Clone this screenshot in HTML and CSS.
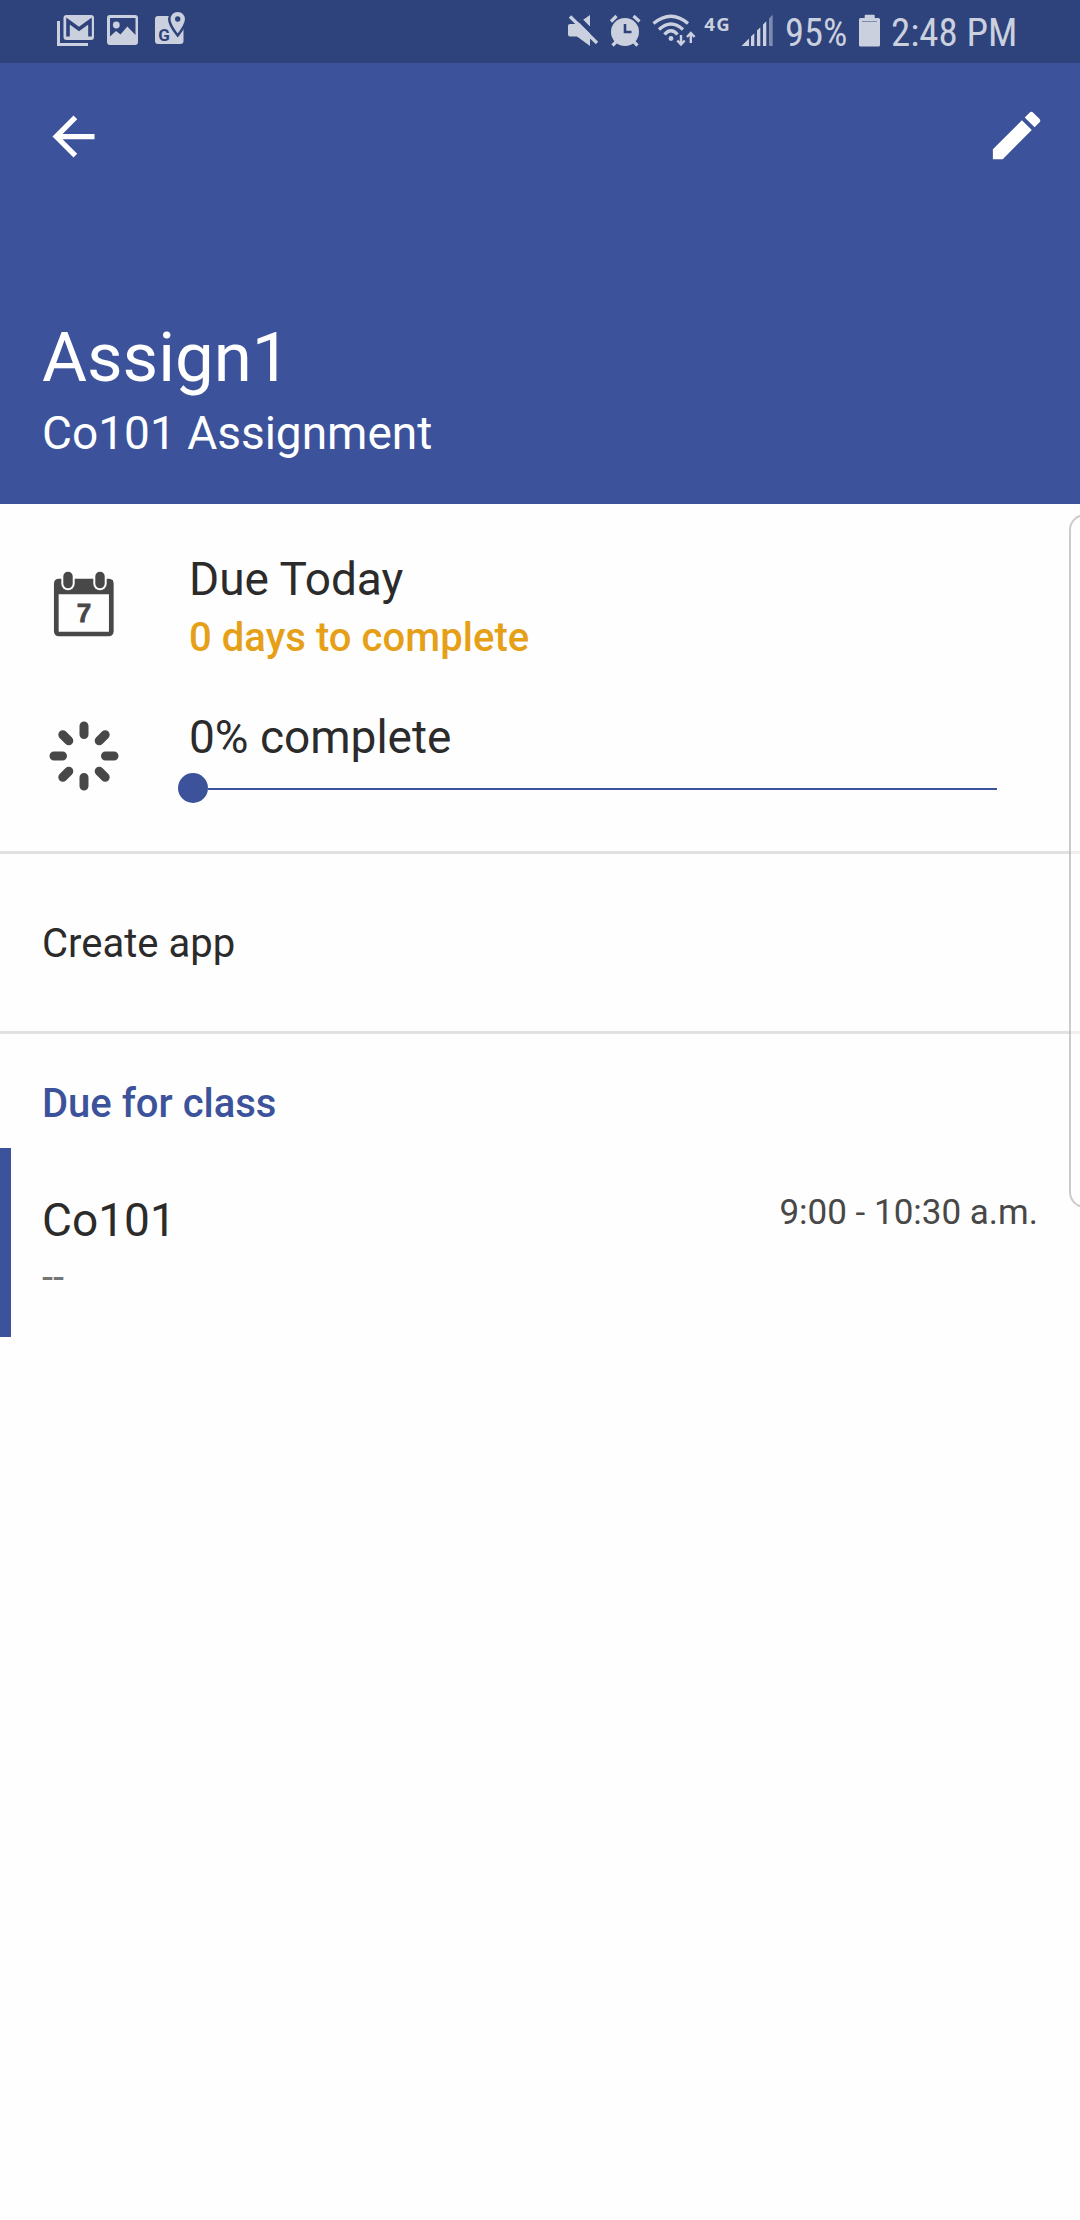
FILE: index.html
```
<!DOCTYPE html>
<html lang="en">
<head>
<meta charset="utf-8">
<title>Assign1</title>
<link rel="stylesheet" href="styles.css">
</head>
<body>
<div class="status">
  <div class="status-group">
    <svg width="50" height="63" viewBox="50 0 50 63"><path class="line" d="M58.500 21V44.500H88" stroke-width="3"/><rect class="fill" x="63.500" y="15" width="30.500" height="25" rx="3"/><path class="cut" d="M68 36.500V21L79 29L90 21V36.500" stroke-width="3.600"/></svg>
    <svg width="46" height="63" viewBox="100 0 46 63"><rect class="fill" x="107" y="15" width="31" height="30" rx="3"/><path class="dark" d="M110 18H135.500V35L127.300 26.500L120.500 34.500L116 31L110 36.500Z"/><circle class="fill" cx="116.300" cy="25" r="3.400"/></svg>
    <svg width="50" height="63" viewBox="146 0 50 63"><rect class="fill" x="155" y="16" width="28.500" height="28" rx="3"/><path class="fill edge" d="M177.700 12c-4.100 0-7.200 3.200-7.200 7.100 0 5.400 7.200 14.400 7.200 14.400s7.200-9 7.200-14.400c0-3.900-3.100-7.100-7.200-7.100z"/><path class="fill" d="M177.700 12c-4.100 0-7.200 3.200-7.200 7.100 0 5.400 7.200 14.400 7.200 14.400s7.200-9 7.200-14.400c0-3.900-3.100-7.100-7.200-7.100z"/><circle class="dark" cx="177.700" cy="19" r="2.700"/><text class="g" x="158.300" y="40.800">G</text></svg>
  </div>
  <div class="status-group">
    <svg width="44" height="63" viewBox="560 0 44 63"><path class="fill" d="M570 24H577L590 15V46L577 36.500H570Q568 36.500 568 34.500V26Q568 24 570 24Z"/><path class="cut" d="M572.500 12.500L600 40" stroke-width="5"/><path class="line" d="M570 16.500L597 43" stroke-width="3.400"/></svg>
    <svg width="43" height="63" viewBox="604 0 43 63"><circle class="fill" cx="625" cy="32" r="14"/><path class="cut" d="M625 24V32H631.500" stroke-width="2.600"/><path class="line" d="M611 21.500L616.500 16M633.500 16L639.500 21.500M612.500 45.500L616 42M637.500 45.500L634 42" stroke-width="3.200"/></svg>
    <svg width="53" height="63" viewBox="647 0 53 63"><path class="line" d="M653.500 23.500Q671 9 688 23.500M659 29.500Q671 18.500 683 29.500M664.500 34.500Q671 27 677.500 34.500" stroke-width="3.400"/><circle class="fill" cx="671" cy="38.500" r="2.400"/><path class="line" d="M681 35V44M677.300 40.500L681 44.500L684.700 40.500M690.800 43V33.500M687 37L690.800 33L694.600 37" stroke-width="2.400"/></svg>
    <svg width="36" height="63" viewBox="700 0 36 63"><text class="net" x="704.300" y="30.700" textLength="25.500">4G</text></svg>
    <svg width="44" height="63" viewBox="736 0 44 63"><path class="fill" d="M741.500 46L749 38.500V46ZM751 36.500L754.300 33.200V46H751ZM757 30.500L760.300 27.200V46H757ZM763 24.500L766.300 21.200V46H763Z"/><path class="fill dim" d="M769 18.500L772.700 14.800V46H769Z"/></svg>
    <svg width="73" height="63" viewBox="780 0 73 63"><text class="clock" x="785" y="45.700" textLength="62.500" lengthAdjust="spacingAndGlyphs">95%</text></svg>
    <svg width="33" height="63" viewBox="853 0 33 63"><path class="fill" d="M864.700 18V15.500Q864.700 14.700 865.500 14.700H874Q874.700 14.700 874.700 15.500V18H878.500Q880 18 880 19.500V45Q880 46.500 878.500 46.500H860.500Q859 46.500 859 45V19.500Q859 18 860.500 18Z"/><path class="cut dim" d="M862 21.500H877" stroke-width="1"/></svg>
    <svg width="194" height="63" viewBox="886 0 194 63"><text class="clock" x="891" y="45.700" textLength="126.500" lengthAdjust="spacingAndGlyphs">2:48 PM</text></svg>
  </div>
</div>

<header class="header">
  <div class="toolbar">
    <svg width="63" height="63" viewBox="0 0 24 24" fill="#fff"><path d="M20 11H7.830l5.590-5.590L12 4l-8 8 8 8 1.410-1.410L7.830 13H20z"/></svg>
    <svg class="edit" width="63" height="63" viewBox="0 0 24 24" fill="#fff"><path d="M3 17.250V21h3.750L17.810 9.940l-3.750-3.750L3 17.250zM20.710 7.040a1 1 0 0 0 0-1.410l-2.340-2.340a1 1 0 0 0-1.410 0l-1.830 1.830 3.750 3.750 1.830-1.830z"/></svg>
  </div>
  <h1 class="title">Assign1</h1>
  <p class="subtitle">Co101 Assignment</p>
</header>

<main>
  <section class="details">
    <div class="row due">
      <svg class="icon" width="72" height="72" viewBox="48 568 72 72">
        <rect x="56.300" y="581" width="55" height="53" rx="2.500" fill="none" stroke="#484848" stroke-width="4.700"/>
        <path d="M55 580H113V594.300H55Z" fill="#484848"/>
        <g fill="#fefefe"><rect x="61.300" y="569.700" width="13.400" height="20.600" rx="6.700"/><rect x="93.300" y="569.700" width="13.400" height="20.600" rx="6.700"/></g>
        <g fill="#484848"><rect x="63.300" y="571.700" width="9.400" height="16.600" rx="4.700"/><rect x="95.300" y="571.700" width="9.400" height="16.600" rx="4.700"/></g>
        <text class="day" x="84" y="622.300">7</text>
      </svg>
      <div>
        <p class="big">Due Today</p>
        <p class="warn">0 days to complete</p>
      </div>
    </div>
    <div class="row progress">
      <svg class="icon" width="72" height="72" viewBox="-36 -36 72 72"><path d="M0-30V-21.500M0 30V21.500M-30 0H-21.500M30 0H21.500M-21.200-21.200L-15.200-15.200M21.200-21.200L15.200-15.200M-21.200 21.200L-15.200 15.200M21.200 21.200L15.200 15.200" stroke="#484848" stroke-width="9" stroke-linecap="round"/></svg>
      <div class="grow">
        <p class="big">0% complete</p>
        <div class="slider"><span class="thumb"></span><span class="track"></span></div>
      </div>
    </div>
  </section>
  <section class="note">Create app</section>
  <section>
    <h2 class="heading">Due for class</h2>
    <div class="class-row">
      <div>
        <p class="big">Co101</p>
        <p class="room">--</p>
      </div>
      <p class="time">9:00 - 10:30 a.m.</p>
    </div>
  </section>
</main>
<div class="edge-handle"></div>
</body>
</html>
```
FILE: styles.css
```
* { box-sizing: border-box; }
body {
  margin: 0;
  position: relative;
  width: 1080px;
  height: 2220px;
  overflow: hidden;
  background: #fefefe;
  color: #2b2b2b;
  font-family: Roboto, "Liberation Sans", sans-serif;
}
p, h1, h2 { margin: 0; font-weight: 400; }
svg { display: block; flex: none; }

.status {
  display: flex;
  justify-content: space-between;
  height: 63px;
  padding-left: 50px;
  background: #2e437b;
}
.status-group { display: flex; }
.fill { fill: #cbd0df; }
.dark { fill: #2e437b; }
.line { fill: none; stroke: #cbd0df; }
.cut { fill: none; stroke: #2e437b; }
.edge { stroke: #2e437b; stroke-width: 5; }
.dim { opacity: .5; }
.g { font: 700 17px Roboto, sans-serif; fill: #2e437b; }
.net { font: 700 18.600px "Noto Sans", sans-serif; fill: #cbd0df; }
.clock { font: 400 39.375px "Roboto Condensed", Roboto, sans-serif; fill: #cbd0df; }

.header { height: 441px; background: #3c539b; color: #fff; }
.toolbar {
  display: flex;
  align-items: center;
  justify-content: space-between;
  height: 147px;
  padding: 0 32px 0 42px;
}
.edit { margin-bottom: 2px; }
.title { margin: 108px 42px 8px; font-size: 69px; line-height: 80px; }
.subtitle { margin-left: 42px; font-size: 46px; line-height: 54px; }

.details { height: 350px; padding-top: 47px; border-bottom: 3px solid #e1e1e1; }
.row { display: flex; padding-left: 48px; }
.row .icon { margin-right: 69px; }
.due { height: 158px; }
.due .icon { margin-top: 17px; }
.day { font: 700 26px "Liberation Sans", sans-serif; fill: #484848; stroke: #484848; stroke-width: .8px; text-anchor: middle; }
.progress .icon { margin-top: 11px; }
.grow { flex: 1; }
.big { font-size: 46px; line-height: 57px; }
.warn { margin-top: 7px; color: #e6a018; font-size: 40px; font-weight: 500; line-height: 46px; letter-spacing: .05px; }
.slider { display: flex; align-items: center; height: 30px; margin: 7px 83px 0 -11px; }
.thumb { width: 30px; height: 30px; border-radius: 50%; background: #3c539b; }
.track { flex: 1; height: 2px; margin-top: 2px; background: #3c539b; }

.note { height: 180px; padding: 67px 42px 0; border-bottom: 3px solid #e1e1e1; font-size: 40px; line-height: 46px; }
.heading { height: 114px; padding: 47px 42px 0; color: #3c539b; font-size: 40px; font-weight: 500; line-height: 46px; }
.class-row {
  display: flex;
  justify-content: space-between;
  height: 189px;
  padding: 44px 42px 0 31px;
  border-left: 11px solid #3c539b;
}
.room { margin-top: 7px; color: #757575; font-size: 40px; line-height: 44px; }
.time { margin-top: 1px; color: #484848; font-size: 35px; line-height: 40px; }

.edge-handle {
  position: absolute;
  left: 1069px;
  top: 514px;
  width: 40px;
  height: 694px;
  border: 2px solid rgba(160, 160, 160, .55);
  border-radius: 16px;
  background: rgba(255, 255, 255, .5);
}
```
